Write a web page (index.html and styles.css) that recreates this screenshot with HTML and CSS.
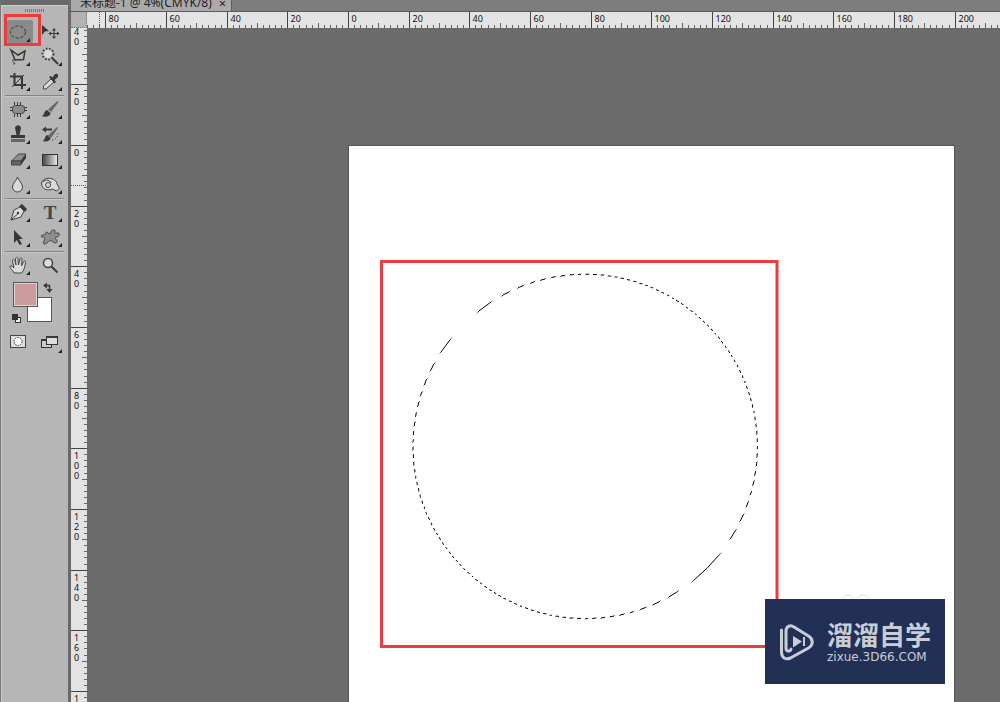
FILE: index.html
```html
<!DOCTYPE html>
<html lang="zh-CN">
<head>
<meta charset="utf-8">
<title>未标题-1</title>
<link rel="stylesheet" href="styles.css">
</head>
<body>
<div class="app">
  <aside class="tools" aria-label="Tools">
    <div class="grip"></div>
    <div class="group">
      <button class="tool active" aria-label="Elliptical marquee"><svg viewBox="0 0 32 25"><rect class="pressed" x="5" y="1" width="26" height="23" rx="2"/><ellipse cx="16" cy="13" rx="7.500" ry="6" class="line" stroke-dasharray="3.200 1.600"/><path class="more" d="M28 19v4h-4z"/></svg></button>
      <button class="tool" aria-label="Move"><svg viewBox="0 0 32 25"><path class="ink" d="M8 6l7 6-4 .5L8 16z"/><path class="line" d="M20 10v9M15.500 14.500h9"/><path class="ink" d="M20 9l2 2.500h-4zM20 20l2-2.500h-4zM14.500 14.500l2.500-2v4zM25.500 14.500l-2.500-2v4z"/></svg></button>
      <button class="tool" aria-label="Polygonal lasso"><svg viewBox="0 0 32 25"><path class="line thick" d="M9 6l7 5 7-4-1.500 8.500-8.500 .5z"/><path class="line" d="M14 16c-3-2-4.500 1-2.500 2s2 2-.5 2"/><path class="more" d="M28 18v4h-4z"/></svg></button>
      <button class="tool" aria-label="Magic wand"><svg viewBox="0 0 32 25"><circle cx="14" cy="10" r="4" class="pale"/><circle cx="14" cy="10" r="5.500" class="line" stroke-width="2" stroke-dasharray="1.500 1.800"/><path class="line heavy" d="M18 14l6 6"/><path class="more" d="M28 18v4h-4z"/></svg></button>
      <button class="tool" aria-label="Crop"><svg viewBox="0 0 32 25"><path class="line heavy" d="M12.500 4v12H24M8 7.500h12V20"/><path class="line" d="M10 18L22 6"/><path class="more" d="M28 18v4h-4z"/></svg></button>
      <button class="tool" aria-label="Eyedropper"><svg viewBox="0 0 32 25"><path class="pale edge" d="M17 10l3 3-8 7H9.500v-3z"/><path class="ink" d="M15 8l2-1 1.500 1.500 2-3c2-2 5 0 3 3l-3 2.500L22 13l-1.500 1.500z"/><path class="more" d="M28 18v4h-4z"/></svg></button>
    </div>
    <hr class="rule">
    <div class="group">
      <button class="tool" aria-label="Patch"><svg viewBox="0 0 32 25"><rect x="10.500" y="8.500" width="12" height="8" rx="3" class="soft edge"/><path class="line" d="M12.500 5v3m3-3v3m3-3v3M12.500 17v3m3-3v3m3-3v3M8 10.500h3M8 13.500h3M22 10.500h3M22 13.500h3"/><path class="more" d="M28 18v4h-4z"/></svg></button>
      <button class="tool" aria-label="Brush"><svg viewBox="0 0 32 25"><path class="mid" d="M23.500 4l1 1-7.500 10-3-2.500z"/><path class="ink" d="M13 13l3.500 3c0 3-5 5-9 3 3 0 2-5 5.500-6z"/><path class="more" d="M28 18v4h-4z"/></svg></button>
      <button class="tool" aria-label="Clone stamp"><svg viewBox="0 0 32 25"><path class="ink" d="M13.500 8a3 3 0 1 1 5 0l-1 5H23v3H9v-3h5.500z"/><path class="mid" d="M9 17h14v3H9z"/><path class="more" d="M28 18v4h-4z"/></svg></button>
      <button class="tool" aria-label="History brush"><svg viewBox="0 0 32 25"><path class="mid" d="M23 5l1 1-7 10-3-2.500z"/><path class="ink" d="M13 13l3.500 3c0 3-4 4-8 3 3-1 2-5 4.500-6zM8 7.500l4-3v2h6v2h-6v2z"/><path class="line" stroke-dasharray="1 2" d="M18 18c4 0 6-4 6-7"/><path class="more" d="M28 18v4h-4z"/></svg></button>
      <button class="tool" aria-label="Eraser"><svg viewBox="0 0 32 25"><path class="soft edge" d="M16.500 7H24l-5 7H9.500z"/><path class="mid edge" d="M9.500 14H19v4H9.500z"/><path class="ink" d="M19 14l5-7v4l-5 7z"/><path class="more" d="M28 18v4h-4z"/></svg></button>
      <button class="tool" aria-label="Gradient"><svg viewBox="0 0 32 25"><defs><linearGradient id="fade"><stop stop-color="#444"/><stop offset="1" stop-color="#eee"/></linearGradient></defs><rect x="8.500" y="7.500" width="15" height="11" fill="url(#fade)" stroke="#333"/><path class="more" d="M28 18v4h-4z"/></svg></button>
      <button class="tool" aria-label="Blur"><svg viewBox="0 0 32 25"><path class="pale edge" d="M15.500 5c1 4 5 6 5 10a5 5 0 0 1-10 0c0-4 4-6 5-10z"/><path class="more" d="M28 18v4h-4z"/></svg></button>
      <button class="tool" aria-label="Sponge"><svg viewBox="0 0 32 25"><path class="pale edge" d="M7.500 11c1-5 9-6 13-3 3 2 2 5 5 8l-3 3-4-2c-4 2-11 1-11-6z"/><circle cx="14" cy="13" r="2.500" class="pale edge"/><path class="line" d="M9 10c3-3 7-2 8 1"/><path class="more" d="M28 18v4h-4z"/></svg></button>
    </div>
    <hr class="rule">
    <div class="group">
      <button class="tool" aria-label="Pen"><svg viewBox="0 0 32 25"><path class="pale edge" d="M18 7l4 4-3 6-10 3 3-10z"/><path class="ink" d="M17 6l3-2 5 5-2 3z"/><path class="line" d="M9 20l6.500-6"/><circle class="ink" cx="16" cy="13" r="1.200"/><path class="more" d="M28 18v4h-4z"/></svg></button>
      <button class="tool" aria-label="Type"><svg viewBox="0 0 32 25"><text class="letter" x="16" y="19" text-anchor="middle">T</text><path class="more" d="M28 18v4h-4z"/></svg></button>
      <button class="tool" aria-label="Path selection"><svg viewBox="0 0 32 25"><path class="ink" d="M12 5l9 9h-4l3 5-2.500 1-2.500-5-3 3z"/><path class="more" d="M28 18v4h-4z"/></svg></button>
      <button class="tool" aria-label="Custom shape"><svg viewBox="0 0 32 25"><path class="soft edge" d="M14 8c1 1 3 1 3-1s4-3 4-1-1 3 2 2 3 3 0 4c-3 0-1 2 0 4s-3 3-5 0c-2-1-3 0-5 2s-5 1-3-2 0-4-2-4 0-3 2-2c2 0 1-5 4-2z"/><path class="more" d="M28 18v4h-4z"/></svg></button>
    </div>
    <hr class="rule">
    <div class="group">
      <button class="tool" aria-label="Hand"><svg viewBox="0 0 32 25"><path class="pale edge" d="M12 20c-1-3-5-5-4-7 1-1 3 1 4 2L10.500 8c0-2 2-2 2.500 0l1 4-.5-6c0-2 2.500-2 2.500 0l.5 6L18 6c0-2 2.500-1 2 1l-.5 6 2-4c1-2 2.500-1 2 1-1 4-1 7-4 10z"/><path class="more" d="M28 18v4h-4z"/></svg></button>
      <button class="tool" aria-label="Zoom"><svg viewBox="0 0 32 25"><circle cx="14" cy="10" r="4.500" class="pale edge" stroke-width="1.500"/><path class="line heavy" d="M17.500 13.500l6 6"/></svg></button>
    </div>
    <div class="colours">
      <svg viewBox="0 0 64 52">
        <rect x="25.500" y="19.500" width="24" height="24" fill="#fff" stroke="#555"/>
        <rect x="11.500" y="4.500" width="24" height="24" fill="#d8d8d8" stroke="#555"/>
        <rect x="13" y="6" width="21" height="21" fill="#cb9c9c"/>
        <path class="line thick" d="M44 7.500h3.500V12"/><path class="ink" d="M41 7.500l4-3v6zM47.500 15l-3-4h6z"/>
        <rect x="13.500" y="39.500" width="5" height="5" fill="#eee" stroke="#333"/><rect x="10" y="36" width="6" height="6" fill="#333"/>
      </svg>
    </div>
    <div class="group">
      <button class="tool" aria-label="Quick mask"><svg viewBox="0 0 32 25"><rect x="8.500" y="5.500" width="15" height="12" fill="#ddd" stroke="#444"/><circle cx="16" cy="11.500" r="4" fill="#fff" stroke="#333" stroke-dasharray="1.500 1"/></svg></button>
      <button class="tool" aria-label="Screen mode"><svg viewBox="0 0 32 25"><rect x="7.500" y="9.500" width="10" height="8" fill="#ccc" stroke="#333"/><path class="ink" d="M7 9h6v2H7z"/><rect x="12.500" y="6.500" width="11" height="8" fill="#ddd" stroke="#333"/><path class="ink" d="M12 6h12v2H12z"/><path class="more" d="M28 19v4h-4z"/></svg></button>
    </div>
  </aside>
  <main class="document">
    <header class="tabs"><div class="tab"><span class="name">未标题-1 @ 4%(CMYK/8)</span><button class="close" aria-label="Close">×</button></div></header>
    <div class="corner"></div>
    <svg class="ruler-x" id="ruler-x" role="img" aria-label="Horizontal ruler"></svg>
    <svg class="ruler-y" id="ruler-y" role="img" aria-label="Vertical ruler"></svg>
    <section class="workspace">
      <div class="artboard"></div>
      <svg class="selection" width="400" height="390" viewBox="380 260 400 390">
        <defs><linearGradient id="ants" gradientUnits="userSpaceOnUse" x1="394.900" y1="394.900" x2="398.800" y2="398.800" spreadMethod="repeat"><stop offset="0"/><stop offset=".48"/><stop offset=".48" stop-color="#fff"/><stop offset="1" stop-color="#fff"/></linearGradient></defs>
        <rect x="381.500" y="261.500" width="395.500" height="385" fill="none" stroke="#ec3d40" stroke-width="3"/>
        <circle cx="585.200" cy="446.400" r="172.300" fill="none" stroke="url(#ants)"/>
      </svg>
      <svg class="rings" width="32" height="12" viewBox="0 0 32 12"><circle cx="9" cy="8" r="6"/><circle cx="24" cy="8" r="6"/></svg>
      <div class="brand">
        <svg class="logo" width="36" height="38" viewBox="0 0 36 38"><path d="M2.500 7v22c0 6 4 8 9 6l18-10c5-3 5-9 0-12L15 4C11 1 7 4 7 8v17c0 4 5 4 5 1"/><path class="play" d="M14 13l9 5.500-9 6zM24 14h2v9h-2z"/></svg>
        <div class="words"><div class="title">溜溜自学</div><div class="site">zixue.3D66.COM</div></div>
      </div>
    </section>
  </main>
</div>
<script src="rulers.js"></script>
</body>
</html>
```
FILE: styles.css
```css
* { box-sizing: border-box; }
body { margin: 0; overflow: hidden; font-family: "Noto Sans", "Noto Sans CJK SC", sans-serif; }
.app { display: flex; height: 100vh; background: #6a6a6a; }
.tools { width: 68px; flex: none; padding: 0 2px; background: #b6b6b6; border-top: 5px solid #686868; border-left: 1px solid #777; box-shadow: inset 1px 1px #cecece; }
.grip { height: 14px; padding-top: 4px; }
.grip::after { content: ""; display: block; width: 20px; height: 3px; margin: 0 auto; background: repeating-linear-gradient(90deg, #777 0 1px, #b6b6b6 1px 2px); }
.group { display: grid; grid-template-columns: 32px 32px; grid-auto-rows: 25px; margin-left: -1px; }
.tool { position: relative; padding: 0; border: 0; background: none; display: flex; align-items: center; justify-content: center; }
.tool svg { width: 32px; height: 25px; flex: none; }
.active::after { content: ""; position: absolute; inset: -5px -7px -2px 2px; border: 3px solid #ee3b3c; z-index: 1; }
.pressed { fill: #8a8a8a; }
.letter { font: bold 19px "Liberation Serif", serif; fill: #444; }
.rule { height: 3px; margin: 0 2px; border: 0; border-top: 1px solid #b6b6b6; border-bottom: 1px solid #c6c6c6; background: #858585; }
.colours { height: 52px; margin-left: -1px; }
.colours svg { display: block; width: 64px; height: 52px; }
.ink { fill: #383838; }
.mid { fill: #666; }
.soft { fill: #8e8e8e; }
.pale { fill: #dadada; }
.edge { stroke: #444; }
.line { fill: none; stroke: #383838; }
.thick { stroke-width: 1.5; }
.heavy { stroke-width: 2; }
.more { fill: #222; }
.document { flex: 1; min-width: 0; margin-left: 3px; display: grid; grid-template-columns: 16px 1fr; grid-template-rows: 12px 16px 1fr; }
.tabs { grid-column: 1 / 3; display: flex; background: #7d7d7d; border-bottom: 1px solid #5b5b5b; overflow: hidden; }
.tab { display: flex; align-items: flex-end; gap: 7px; padding: 0 5px 0 9px; background: #aaa; border-right: 1px solid #5b5b5b; color: #222; }
.name { font: 12px/16px "Noto Sans", "Noto Sans CJK SC", sans-serif; white-space: nowrap; }
.close { padding: 0; border: 0; background: none; color: #222; font: 13px/16px "Noto Sans", sans-serif; }
.corner { background: #b2b2b2; border: 1px dotted #777; border-width: 0 1px 1px 0; }
.ruler-x, .ruler-y { display: block; width: 100%; height: 100%; min-height: 0; background: #e3e3e3; overflow: hidden; }
.ruler-x text, .ruler-y text { font: 9px "Noto Sans", sans-serif; fill: #111; }
.tick { stroke: #666; }
.major { stroke: #444; }
.cursor { stroke: #555; stroke-dasharray: 1 1; }
.workspace { position: relative; overflow: hidden; background: #6b6b6b; }
.artboard { position: absolute; left: 261px; top: 117px; width: 607px; bottom: 0; background: #fff; border: 1px solid #555; border-bottom: 0; }
.selection { position: absolute; left: 293px; top: 232px; }
.rings { position: absolute; left: 752px; top: 565px; fill: none; stroke: #ddd; }
.brand { position: absolute; left: 678px; top: 571px; width: 180px; height: 85px; display: flex; align-items: center; gap: 12px; padding-left: 14px; background: #223056; color: #c9cdd5; }
.logo { fill: none; stroke: #c9cdd5; stroke-width: 3; stroke-linecap: round; }
.play { fill: #c9cdd5; stroke: none; }
.title { font: bold 26px/30px "Noto Sans CJK SC", sans-serif; }
.site { font: 12px/16px "DejaVu Sans", sans-serif; white-space: nowrap; }
```
FILE: rulers.js
```js
const NS = "http://www.w3.org/2000/svg";
const STEP = 60.66;

function add(parent, name, attrs, text) {
  const node = document.createElementNS(NS, name);
  for (const key in attrs) node.setAttribute(key, attrs[key]);
  if (text !== undefined) node.textContent = text;
  parent.appendChild(node);
}

function drawRuler(svg, zero, vertical, cursor) {
  const length = vertical ? svg.clientHeight : svg.clientWidth;
  const line = (at, from, cls) => add(svg, "line", vertical
    ? { x1: from, x2: 16, y1: at, y2: at, class: cls }
    : { x1: at, x2: at, y1: from, y2: 16, class: cls });
  const first = -Math.ceil(zero / STEP) * 10;
  for (let i = first; zero + i * STEP / 10 < length; i++) {
    const at = Math.round(zero + i * STEP / 10) + 0.5;
    if (i % 10 === 0) {
      line(at, 0, "major");
      const label = String(Math.abs(i * 2));
      if (vertical) {
        [...label].forEach((c, n) => add(svg, "text", { x: 3, y: at + 10 + n * 10 }, c));
      } else {
        add(svg, "text", { x: at + 3, y: 10 }, label);
      }
    } else {
      line(at, i % 5 === 0 ? 11 : 13, "tick");
    }
  }
  line(cursor + 0.5, 0, "cursor");
}

drawRuler(document.getElementById("ruler-x"), 261, false, 12);
drawRuler(document.getElementById("ruler-y"), 117, true, 157);
```
